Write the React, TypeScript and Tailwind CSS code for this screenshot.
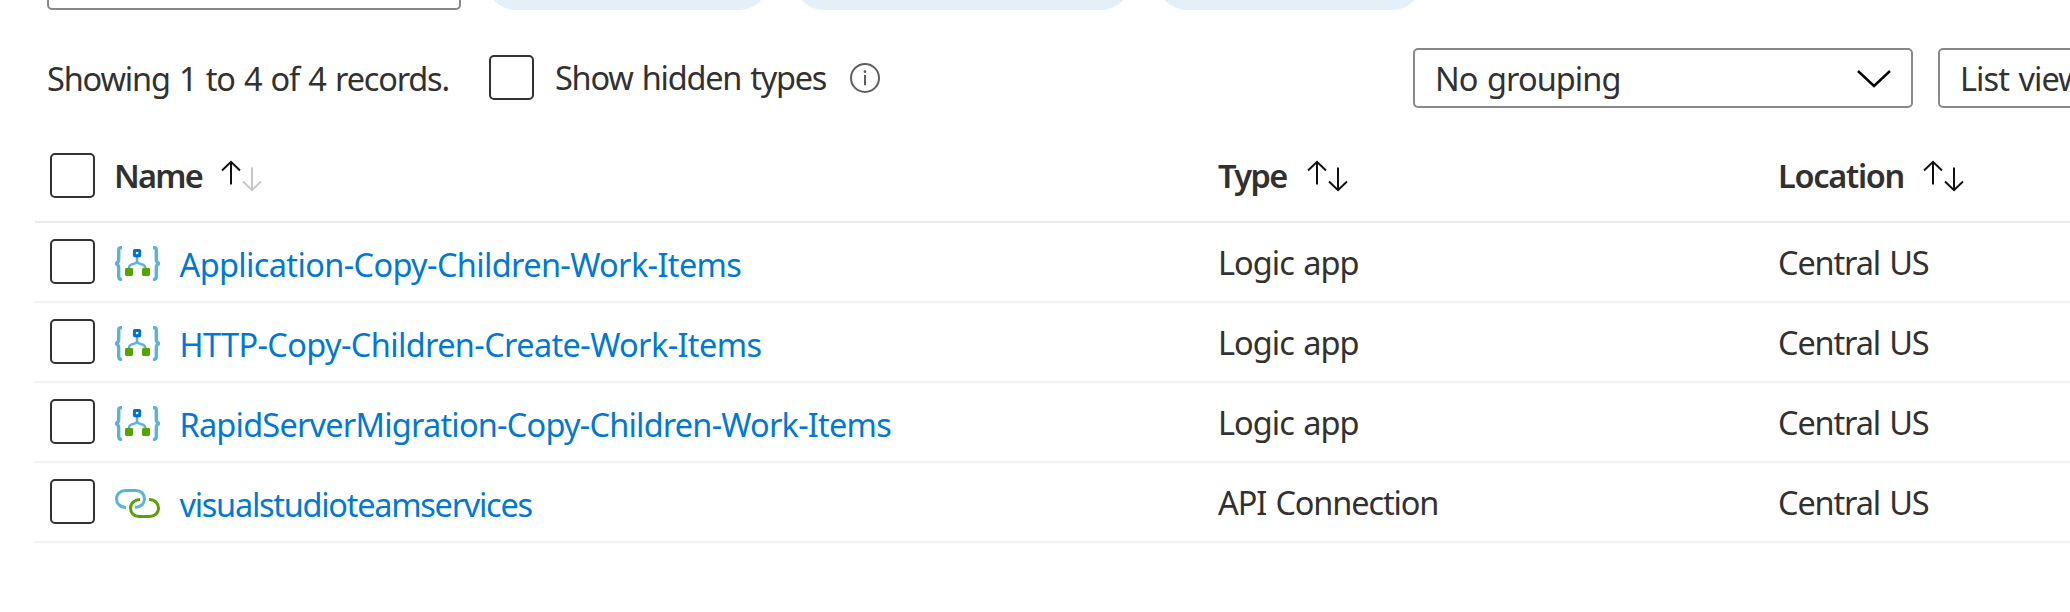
import React from "react";

type Row = {
  name: string;
  kind: "logic" | "connection";
  type: string;
  nameTracking: string;
  typeTracking: string;
};

const rows: Row[] = [
  {
    name: "Application-Copy-Children-Work-Items",
    kind: "logic",
    type: "Logic app",
    nameTracking: "tracking-[-0.64px]",
    typeTracking: "tracking-[-0.97px]",
  },
  {
    name: "HTTP-Copy-Children-Create-Work-Items",
    kind: "logic",
    type: "Logic app",
    nameTracking: "tracking-[-0.63px]",
    typeTracking: "tracking-[-0.97px]",
  },
  {
    name: "RapidServerMigration-Copy-Children-Work-Items",
    kind: "logic",
    type: "Logic app",
    nameTracking: "tracking-[-0.79px]",
    typeTracking: "tracking-[-0.97px]",
  },
  {
    name: "visualstudioteamservices",
    kind: "connection",
    type: "API Connection",
    nameTracking: "tracking-[-1.28px]",
    typeTracking: "tracking-[-1.13px]",
  },
];

function Checkbox({ label }: { label: string }) {
  return (
    <button
      type="button"
      role="checkbox"
      aria-checked={false}
      aria-label={label}
      className="block size-[45px] shrink-0 rounded-[5px] border-2 border-[#323130] bg-white"
    />
  );
}

function SortIcon({ ascending = false }: { ascending?: boolean }) {
  return (
    <svg width="41" height="32" viewBox="0 0 41 32" fill="none" strokeWidth="2" className="shrink-0">
      <path d="M10 24.5V2M1 10.5L10 1.8L19 10.5" stroke="#111111" />
      <path d="M31 7.5V30M22 21.5L31 30.2L40 21.5" stroke={ascending ? "#c8c8c8" : "#111111"} />
    </svg>
  );
}

function LogicAppIcon() {
  return (
    <svg width="45" height="36" viewBox="0 0 45 36" fill="none" className="mt-[3px] shrink-0">
      <g stroke="#59b4d9">
        <path
          d="M7 1.6H6.2Q3.7 1.6 3.7 4.2V13.4Q3.7 16.4 0.8 17.5Q3.7 18.6 3.7 21.6V30.8Q3.7 33.4 6.2 33.4H7"
          strokeWidth="3.4"
        />
        <path
          d="M38 1.6H38.8Q41.3 1.6 41.3 4.2V13.4Q41.3 16.4 44.2 17.5Q41.3 18.6 41.3 21.6V30.8Q41.3 33.4 38.8 33.4H38"
          strokeWidth="3.4"
        />
        <path d="M22 11V15.5Q21.5 17.5 17.5 18.2Q13.7 19 13.7 23M22 15.5Q22.5 17.5 26.5 18.2Q30.6 19 30.6 23" strokeWidth="2.4" />
      </g>
      <rect x="19.4" y="4.4" width="5.4" height="5.4" rx="0.5" stroke="#0072c6" strokeWidth="3" fill="#fff" />
      <rect x="10" y="22" width="8" height="8" rx="1.4" fill="#57a300" />
      <rect x="27" y="22" width="8" height="8" rx="1.4" fill="#57a300" />
    </svg>
  );
}

function ConnectionIcon() {
  return (
    <svg width="45" height="36" viewBox="0 0 45 36" fill="none" strokeWidth="3" className="mt-[3px] shrink-0">
      <path d="M11 21.5C5 21.5 1.5 17.5 1.5 13C1.5 8 5.5 4.5 10.5 4.5H21C26 4.5 29.5 8 29.5 13C29.5 17.5 26 21.2 20 21.5" stroke="#59b4d9" />
      <path d="M25 13.5C19.5 13.5 15.5 17.5 15.5 22C15.5 27 19 30.5 24 30.5H34.5C39.5 30.5 43.5 27 43.5 22C43.5 17.5 40 13.5 34 13.5" stroke="#57a300" />
    </svg>
  );
}

function HeaderCell({ label, className, ascending }: { label: string; className: string; ascending?: boolean }) {
  return (
    <div className="flex h-[45px] items-center font-semibold">
      <span className={`mt-px shrink-0 ${className}`}>{label}</span>
      <SortIcon ascending={ascending} />
    </div>
  );
}

export default function App() {
  return (
    <div className="h-[612px] w-full overflow-hidden bg-white font-['Noto_Sans','Open_Sans',sans-serif] text-[32.5px] leading-[46px] [word-spacing:2px] whitespace-nowrap text-[#323130]">
      <div className="flex h-[10px] items-end overflow-hidden pl-[47px]">
        <div className="h-[60px] w-[414px] shrink-0 rounded-[5px] border-2 border-[#8a8886]" />
        <div className="ml-[25px] h-[60px] w-[283px] shrink-0 rounded-full bg-[#e3f0fa]" />
        <div className="ml-[25px] h-[60px] w-[337px] shrink-0 rounded-full bg-[#e3f0fa]" />
        <div className="ml-[26px] h-[60px] w-[265px] shrink-0 rounded-full bg-[#e3f0fa]" />
      </div>

      <div className="flex h-[135px] items-center pl-[47px]">
        <span className="mt-[3px] w-[442px] shrink-0 tracking-[-1.18px]">Showing 1 to 4 of 4 records.</span>
        <Checkbox label="Show hidden types" />
        <span className="mt-px ml-[21px] w-[295px] shrink-0 tracking-[-1.25px]">Show hidden types</span>
        <svg width="30" height="30" viewBox="0 0 30 30" fill="none" className="shrink-0">
          <circle cx="15" cy="15" r="14" stroke="#605e5c" strokeWidth="2" />
          <path d="M15 12V22.3" stroke="#605e5c" strokeWidth="2" />
          <circle cx="15" cy="8.7" r="1.4" fill="#605e5c" />
        </svg>
        <div className="mt-px ml-[533px] flex h-[60px] w-[500px] shrink-0 items-center justify-between rounded-[5px] border-2 border-[#8a8886] pr-[20px] pl-5">
          <span className="mt-[2px] tracking-[-0.93px]">No grouping</span>
          <svg width="34" height="18" viewBox="0 0 34 18" fill="none" className="mt-0.5">
            <path d="M1 1L17 16L33 1" stroke="#000" strokeWidth="2.4" />
          </svg>
        </div>
        <div className="mt-px ml-[25px] flex h-[60px] w-[500px] shrink-0 items-center rounded-[5px] border-2 border-[#8a8886] pl-5">
          <span className="mt-[2px] tracking-[-0.93px]">List view</span>
        </div>
      </div>

      <div className="mt-px ml-[35px]">
        <div className="grid h-[77px] grid-cols-[64px_1104px_560px_1fr] border-b-2 border-[#ebebeb] pt-[7px] pl-[15px]">
          <Checkbox label="Select all" />
          <HeaderCell label="Name" className="w-[107px] tracking-[-1.77px]" ascending />
          <HeaderCell label="Type" className="w-[89px] tracking-[-1.6px]" />
          <HeaderCell label="Location" className="w-[145px] tracking-[-1.28px]" />
        </div>

        {rows.map((row) => (
          <div
            key={row.name}
            className="grid h-[80px] grid-cols-[65px_1103px_560px_1fr] items-center border-b-2 border-[#f1f1f1] pl-[15px]"
          >
            <div className="-mt-[2px]">
              <Checkbox label={row.name} />
            </div>
            <div className="flex items-center">
              {row.kind === "logic" ? <LogicAppIcon /> : <ConnectionIcon />}
              <a href="#" className={`mt-[5px] ml-[19.5px] text-[#0078d4] ${row.nameTracking}`}>
                {row.name}
              </a>
            </div>
            <span className={`mt-[2px] ${row.typeTracking}`}>{row.type}</span>
            <span className="mt-[2px] tracking-[-1.16px]">Central US</span>
          </div>
        ))}
      </div>
    </div>
  );
}
